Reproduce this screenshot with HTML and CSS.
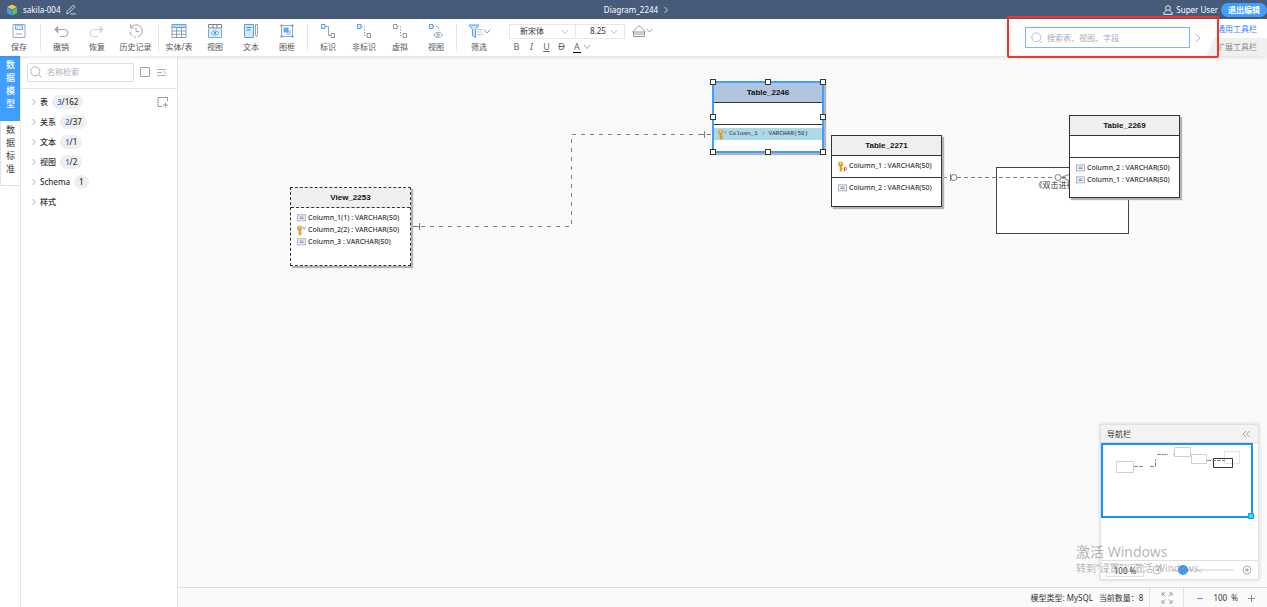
FILE: index.html
```html
<!DOCTYPE html>
<html lang="zh-CN">
<head>
    <meta charset="UTF-8">
    <meta name="viewport" content="width=device-width, initial-scale=1.0">
    <title>sakila-004</title>
    <link rel="stylesheet" href="styles.css">
</head>
<body>
    <!-- shared icons -->
    <svg class="defs" width="0" height="0" aria-hidden="true">
        <symbol id="i-right" viewBox="0 0 8 10"><path d="M2 1l4 4-4 4" fill="none" stroke="currentColor"/></symbol>
        <symbol id="i-down" viewBox="0 0 8 6"><path d="M1 1l3 3.5L7 1" fill="none" stroke="currentColor" stroke-width=".9"/></symbol>
        <symbol id="i-search" viewBox="0 0 12 12"><circle cx="5.3" cy="5.3" r="4.5" fill="none" stroke="currentColor" stroke-width=".9"/><path d="M8.5 8.5l2.8 2.8" stroke="currentColor"/></symbol>
        <symbol id="i-col" viewBox="0 0 9 8"><rect x=".5" y=".8" width="8" height="6" fill="#eef1f6" stroke="#a9adb5" stroke-width=".9"/><path d="M2.5 3h4M2.5 4.5h4" stroke="#7c9ccb" stroke-width="1"/></symbol>
        <symbol id="i-key" viewBox="0 0 11 11"><circle cx="3.6" cy="3" r="2.6" fill="#e2a92f"/><circle cx="3.6" cy="2.2" r=".7" fill="#fff3cf"/><path d="M2.7 5h2v5.5h-2z" fill="#d89a20"/><path d="M4.7 7.2h1.2M4.7 9h1.2" stroke="#d89a20"/></symbol>
    </svg>

    <header class="topbar">
        <div class="project">
            <svg width="12" height="12" viewBox="0 0 12 12"><path d="M6 .5l5 2.5-5 2.6L1 3z" fill="#f8c63d"/><path d="M1 3.4l4.7 2.5v5.6L1 9z" fill="#3f9bf5"/><path d="M11 3.4L6.3 5.9v5.6L11 9z" fill="#5cc06a"/></svg>
            <span class="project-name">sakila-004</span>
            <button class="plain" aria-label="重命名"><svg width="11" height="11" viewBox="0 0 11 11"><path d="M1 7.600L7.200 1.200l1.700 1.600-6.200 6.400-2 .4zM4.500 9.900H10" fill="none" stroke="#dfe5ee" stroke-width=".9"/></svg></button>
        </div>
        <div class="diagram-name">Diagram_2244 <svg width="6" height="8"><use href="#i-right"/></svg></div>
        <div class="user">
            <svg width="10" height="10" viewBox="0 0 10 10"><circle cx="5" cy="3" r="2.4" fill="none" stroke="#fff" stroke-width=".9"/><path d="M.7 9.3c0-2.3 1.4-3.4 2.8-3.7M9.3 9.3c0-2.3-1.4-3.4-2.8-3.7M.5 9.3h9" fill="none" stroke="#fff" stroke-width=".9"/></svg>
            <span>Super User</span>
            <button class="exit">退出编辑</button>
        </div>
    </header>

    <div class="toolbar">
        <button class="tool save"><svg viewBox="0 0 16 16"><path d="M2 1.500h12v13H2z" fill="none" stroke="#9aa6b8"/><path d="M4.500 2h7v4.500h-7z" fill="#d6e8ff" stroke="#6aabf7"/><path d="M5 11h6" stroke="#9aa6b8"/></svg>保存</button>
        <i class="sep"></i>
        <button class="tool"><svg viewBox="0 0 16 16"><path d="M5 3L1.500 6.500 5 10z" fill="#9aa6b8" stroke="#9aa6b8" stroke-width=".6"/><path d="M4 6.500h7.500a3.500 3.500 0 010 7H7" fill="none" stroke="#9aa6b8"/></svg>撤销</button>
        <button class="tool"><svg viewBox="0 0 16 16"><path d="M11 3l3.500 3.500L11 10z" fill="#d3d9e2" stroke="#c8d0dc" stroke-width=".6"/><path d="M12 6.500H4.500a3.500 3.500 0 000 7H9" fill="none" stroke="#c8d0dc"/></svg>恢复</button>
        <button class="tool history"><svg viewBox="0 0 16 16"><path d="M3 4.500A6.200 6.200 0 112 9" fill="none" stroke="#9aa6b8" stroke-dasharray="24 1.500 2 1.500"/><path d="M2.500 1.500v3.500H6M8 4.500V8.500h3" fill="none" stroke="#9aa6b8"/></svg>历史记录</button>
        <i class="sep"></i>
        <button class="tool"><svg viewBox="0 0 16 16"><path d="M1 1.500h14v3H1z" fill="#b9d8ff"/><path d="M1 1.500h14v13H1zM1 4.500h14M1 8h14M1 11.300h14M5.500 4.500v10M10.500 4.500v10" fill="none" stroke="#7f93b3" stroke-width=".9"/><path d="M1 1.500h14M1 4.500h14" stroke="#5ba3f8"/></svg>实体/表</button>
        <button class="tool"><svg viewBox="0 0 16 16"><path d="M1.500 5V1.500h13V5zM6 1.500V5M10 1.500V5" fill="none" stroke="#77808f"/><path d="M1.500 6v8.500h13V6" fill="#e1efff" stroke="#6aabf7"/><path d="M4.200 10c2-2.800 5.600-2.800 7.600 0-2 2.800-5.600 2.800-7.600 0z" fill="#fff" stroke="#4196f7" stroke-width=".9"/><circle cx="8" cy="10" r="1.200" fill="#4196f7"/></svg>视图</button>
        <button class="tool"><svg viewBox="0 0 16 16"><path d="M1.500 1.500h9v13h-9z" fill="#d6e8ff" stroke="#4f9ef8"/><path d="M3.500 4.500h5M3.500 7h4" stroke="#3b87e8"/><path d="M12.500 1.500h2v10l-1 2.500-1-2.500z" fill="none" stroke="#8a94a5" stroke-width=".9"/></svg>文本</button>
        <button class="tool"><svg viewBox="0 0 16 16"><path d="M2.500 2.500h11v11h-11z" fill="none" stroke="#9aa6b8"/><path d="M1.500 1.500h2v2h-2zM12.500 1.500h2v2h-2zM1.500 12.500h2v2h-2zM12.500 12.500h2v2h-2z" fill="#8491a6"/><path d="M7 7h5v5H7z" fill="#b5d6ff"/><path d="M4.500 4.500h5v5h-5z" fill="#61a8fa"/></svg>图框</button>
        <i class="sep"></i>
        <button class="tool"><svg viewBox="0 0 16 16"><path d="M1.500 1.500H5v4H1.500z" fill="#e3f0ff" stroke="#4f9ef8"/><path d="M5 3.500h3.500v9H11" fill="none" stroke="#8a94a5" stroke-width=".9"/><path d="M11 10.500h3.500v4H11z" fill="#fff" stroke="#8a94a5"/></svg>标识</button>
        <button class="tool"><svg viewBox="0 0 16 16"><path d="M1.500 1.500H5v4H1.500z" fill="#e3f0ff" stroke="#4f9ef8"/><path d="M5 3.500h3.500v9H11" fill="none" stroke="#8a94a5" stroke-width=".9" stroke-dasharray="1.500 1.500"/><path d="M11 10.500h3.500v4H11z" fill="#fff" stroke="#8a94a5"/></svg>非标识</button>
        <button class="tool"><svg viewBox="0 0 16 16"><path d="M1.500 1.500H5v4H1.500z" fill="#fff" stroke="#8a94a5"/><path d="M5 3.500h3.500v9H11" fill="none" stroke="#8a94a5" stroke-width=".9" stroke-dasharray="1.500 1.500"/><path d="M11 10.500h3.500v4H11z" fill="#fff" stroke="#8a94a5"/></svg>虚拟</button>
        <button class="tool"><svg viewBox="0 0 16 16"><path d="M1.500 1.500H5v4H1.500z" fill="#e3f0ff" stroke="#4f9ef8"/><path d="M5 3.500h5.500v4" fill="none" stroke="#8a94a5" stroke-width=".9" stroke-dasharray="1.500 1.500"/><path d="M6 12c2.200-3.400 6.300-3.400 8.500 0-2.200 3.400-6.300 3.400-8.500 0z" fill="none" stroke="#8a94a5" stroke-width=".9"/><circle cx="10.200" cy="12" r="1.200" fill="none" stroke="#8a94a5" stroke-width=".9"/></svg>视图</button>
        <i class="sep"></i>
        <button class="tool filter"><svg class="wide" viewBox="0 0 24 16"><path d="M2 2h10L8.500 6.500v8l-3-1.800V6.500z" fill="#cfe4ff" stroke="#4f9ef8"/><path d="M10.500 6.500h5M10.500 9h5M10.500 11.500h5" stroke="#b3bcc9" stroke-width=".9"/><path d="M17 6.500l3.200 3.500 3.200-3.500" fill="none" stroke="#8a94a5"/></svg>筛选</button>

        <div class="format">
            <div class="format-row">
                <span class="select family">
                    <select aria-label="字体"><option>新宋体</option></select>
                    <svg width="8" height="6"><use href="#i-down"/></svg>
                </span>
                <span class="select size">
                    <select aria-label="字号"><option>8.25</option></select>
                    <svg width="8" height="6"><use href="#i-down"/></svg>
                </span>
                <button class="plain fill" aria-label="填充"><svg width="24" height="14" viewBox="0 0 24 14"><path d="M1.500 8L8 1.500 14.500 8zM2.500 8v4.500h11V8M2.500 10h11" fill="none" stroke="#8c8c8c" stroke-width=".9"/><path d="M15.500 5l3 3 3-3" fill="none" stroke="#8a94a5" stroke-width=".9"/></svg></button>
            </div>
            <div class="format-row marks">
                <button class="plain mark">B</button>
                <button class="plain mark"><em>I</em></button>
                <button class="plain mark"><u>U</u></button>
                <button class="plain mark"><s>D</s></button>
                <button class="plain mark color">A</button>
                <svg width="8" height="6"><use href="#i-down"/></svg>
            </div>
        </div>

        <div class="finder">
            <label class="find-box">
                <svg width="12" height="12"><use href="#i-search"/></svg>
                <input type="text" placeholder="搜索表、视图、字段" aria-label="搜索">
            </label>
            <button class="plain next" aria-label="下一个"><svg width="8" height="10"><use href="#i-right"/></svg></button>
        </div>
        <div class="bar-tabs">
            <button class="bar-tab active">通用工具栏</button>
            <button class="bar-tab">扩展工具栏</button>
        </div>
        <div class="highlight"></div>
    </div>

    <main class="main">
        <nav class="side-tabs">
            <button class="side-tab active">数据模型</button>
            <button class="side-tab">数据标准</button>
        </nav>

        <aside class="sidebar">
            <div class="side-search">
                <label class="side-box">
                    <svg width="12" height="12"><use href="#i-search"/></svg>
                    <input type="text" placeholder="名称检索" aria-label="名称检索">
                </label>
                <input type="checkbox" class="check" aria-label="全选">
                <button class="plain" aria-label="排序"><svg width="11" height="10" viewBox="0 0 11 10"><path d="M1 2.500h9M1 5.500h5M1 8.500h9M7.500 4L9 5.500 7.500 7" fill="none" stroke="#a0a5ad" stroke-width=".9"/></svg></button>
            </div>
            <ul class="tree">
                <li><svg width="6" height="8"><use href="#i-right"/></svg>表<span class="badge"><b>3</b>/162</span>
                    <button class="plain add" aria-label="新增"><svg width="12" height="12" viewBox="0 0 12 12"><path d="M10.500 5V1.500H1v9h4M8.500 6.500v5M6 9h5" fill="none" stroke="#9a9a9a"/></svg></button></li>
                <li><svg width="6" height="8"><use href="#i-right"/></svg>关系<span class="badge"><b>2</b>/37</span></li>
                <li><svg width="6" height="8"><use href="#i-right"/></svg>文本<span class="badge"><b>1</b>/1</span></li>
                <li><svg width="6" height="8"><use href="#i-right"/></svg>视图<span class="badge"><b>1</b>/2</span></li>
                <li><svg width="6" height="8"><use href="#i-right"/></svg>Schema<span class="badge">1</span></li>
                <li><svg width="6" height="8"><use href="#i-right"/></svg>样式</li>
            </ul>
        </aside>

        <section class="work">
            <div class="canvas">
                <div class="note">《双击进行编辑》</div>

                <svg class="links" width="1000" height="300">
                    <g fill="none" stroke="#808080">
                        <path d="M234 170.500H393.500V78.500H534" stroke-dasharray="4 5"/>
                        <path d="M237 170.500h4M241.500 167v7M524 78.500h2M526.500 75v7"/>
                        <path d="M765 121.500h127" stroke-dasharray="4 3"/>
                        <path d="M772.500 118v7M883 121.500l8-3M883 121.500l8 3"/>
                        <circle cx="776" cy="121.500" r="3" fill="#fff"/>
                        <circle cx="880" cy="121.500" r="3" fill="#fff"/>
                    </g>
                </svg>

                <div class="entity view" id="view2253">
                    <h2>View_2253</h2>
                    <div class="part">
                        <p><svg width="11" height="8"><use href="#i-col"/></svg>Column_1(1) : VARCHAR(50)</p>
                        <p><svg width="11" height="11"><use href="#i-key"/><path d="M7 1.500l1.300 3L9.600 1.500" fill="none" stroke="#5cb0d8" stroke-width=".8"/></svg>Column_2(2) : VARCHAR(50)</p>
                        <p><svg width="11" height="8"><use href="#i-col"/></svg>Column_3 : VARCHAR(50)</p>
                    </div>
                </div>

                <div class="entity selected" id="table2246">
                    <h2>Table_2246</h2>
                    <div class="part blank"></div>
                    <div class="part">
                        <p class="on"><svg width="11" height="11"><use href="#i-key"/><path d="M7 1.500l1.300 3L9.600 1.500" fill="none" stroke="#5cb0d8" stroke-width=".8"/></svg>Column_1 : VARCHAR(50)</p>
                    </div>
                    <i class="handle n w"></i><i class="handle n c"></i><i class="handle n e"></i>
                    <i class="handle m w"></i><i class="handle m e"></i>
                    <i class="handle s w"></i><i class="handle s c"></i><i class="handle s e"></i>
                </div>

                <div class="entity" id="table2271">
                    <h2>Table_2271</h2>
                    <div class="part keys">
                        <p><svg width="11" height="11"><use href="#i-key"/><path d="M7.500 10.500V6.500h1a1 1 0 010 2.200h-1" fill="none" stroke="#e33" stroke-width=".9"/></svg>Column_1 : VARCHAR(50)</p>
                    </div>
                    <div class="part">
                        <p><svg width="11" height="8"><use href="#i-col"/></svg>Column_2 : VARCHAR(50)</p>
                    </div>
                </div>

                <div class="entity" id="table2269">
                    <h2>Table_2269</h2>
                    <div class="part blank"></div>
                    <div class="part">
                        <p><svg width="11" height="8"><use href="#i-col"/></svg>Column_2 : VARCHAR(50)</p>
                        <p><svg width="11" height="8"><use href="#i-col"/></svg>Column_1 : VARCHAR(50)</p>
                    </div>
                </div>

                <div class="navigator">
                    <div class="nav-head">导航栏<button class="plain" aria-label="收起"><svg width="8" height="8" viewBox="0 0 8 8"><path d="M4 1L1 4l3 3M7.500 1l-3 3 3 3" fill="none" stroke="#888" stroke-width=".8"/></svg></button></div>
                    <div class="nav-map">
                        <svg width="157" height="117" viewBox="0 0 157 117">
                            <g fill="#fff" stroke="#d0d0d0">
                                <path d="M15.500 18.500h17v11h-17zM73.500 4.500h16v9h-16zM90.500 11.500h15v9h-15z"/>
                                <path d="M123.500 8.500h15v12h-15z" stroke="#e3e3e3"/>
                            </g>
                            <path d="M112.500 15.500h19v9h-19z" fill="none" stroke="#333"/>
                            <path d="M33 23.500h10M49 23.500h5.500M54.500 23v-7M56 11.500h11M72 11.500h1M106 17.500h18" fill="none" stroke="#888" stroke-dasharray="4 1"/>
                            <path d="M1 1h150v73H1z" fill="none" stroke="#1296fb" stroke-width="2"/>
                            <path d="M147.500 70.500h5v5h-5z" fill="#00f0ff" stroke="#3b82e8"/>
                        </svg>
                    </div>
                    <div class="nav-foot">
                        <input type="text" class="nav-zoom" value="100 %" aria-label="缩放比例">
                        <button class="plain" aria-label="缩小"><svg width="10" height="10" viewBox="0 0 10 10"><circle cx="5" cy="5" r="4" fill="none" stroke="#aaa" stroke-width=".8"/><path d="M3 5h4" stroke="#aaa"/></svg></button>
                        <input type="range" class="slider" min="0" max="100" value="14" aria-label="缩放">
                        <button class="plain" aria-label="放大"><svg width="10" height="10" viewBox="0 0 10 10"><circle cx="5" cy="5" r="4" fill="none" stroke="#999" stroke-width=".8"/><path d="M3 5h4M5 3v4" stroke="#999"/></svg></button>
                    </div>
                </div>
            </div>

            <footer class="status">
                <span>模型类型: MySQL</span>
                <span class="count">当前数量：8</span>
                <button class="plain fit" aria-label="全屏"><svg width="12" height="12" viewBox="0 0 12 12"><path d="M1 4V1h3M1 1l3.500 3.500M8 1h3v3M11 1L7.500 4.500M1 8v3h3M1 11l3.500-3.500M11 8v3H8M11 11L7.500 7.500" fill="none" stroke="#999" stroke-width=".9"/></svg></button>
                <div class="zoom">
                    <button class="plain" aria-label="缩小"><svg width="8" height="8"><path d="M1 4.500h6" stroke="#888"/></svg></button>
                    <span>100&nbsp; %</span>
                    <button class="plain" aria-label="放大"><svg width="8" height="8"><path d="M1 4.500h7M4.500 1v7" stroke="#7d8fa8"/></svg></button>
                </div>
            </footer>
        </section>
    </main>

    <div class="watermark">
        <div class="wm-title">激活 Windows</div>
        <div>转到“设置”以激活 Windows。</div>
    </div>
</body>
</html>
```

FILE: styles.css
```css
* {
    box-sizing: border-box;
}
html, body {
    height: 100%;
    margin: 0;
    overflow: hidden;
}
body {
    display: flex;
    flex-direction: column;
    font-family: "Noto Sans", "Noto Sans CJK SC", sans-serif;
    font-size: 8px;
    line-height: 12px;
    color: #333;
    background: #fff;
}
button, input, select {
    font: inherit;
    color: inherit;
}
button {
    padding: 0;
    border: none;
    background: none;
    cursor: pointer;
}
svg {
    display: block;
    flex: none;
}
.defs {
    position: absolute;
}
.plain {
    display: flex;
    align-items: center;
    justify-content: center;
}

/* top bar */
.topbar {
    flex: none;
    display: grid;
    grid-template-columns: 1fr auto 1fr;
    align-items: center;
    height: 19px;
    padding-left: 6px;
    background: #475b7b;
    color: #fff;
}
.project, .diagram-name, .user {
    display: flex;
    align-items: center;
    gap: 5px;
}
.user {
    justify-content: flex-end;
    gap: 3px;
}
.exit {
    width: 46px;
    height: 14px;
    border-radius: 7px;
    background: #409eff;
    line-height: 14px;
    font-weight: bold;
}

/* toolbar */
.toolbar {
    position: relative;
    z-index: 5;
    flex: none;
    display: flex;
    height: 37px;
    background: #fff;
    box-shadow: 0 1px 4px rgba(0, 0, 0, 0.12);
}
.tool {
    flex: none;
    display: flex;
    flex-direction: column;
    align-items: center;
    gap: 2px;
    width: 36px;
    padding-top: 4px;
    color: #555;
    white-space: nowrap;
}
.tool svg {
    width: 16px;
    height: 16px;
}
.tool svg.wide {
    width: 24px;
}
.tool.save {
    width: 38px;
}
.tool.history {
    width: 41px;
}
.tool.filter {
    width: 40px;
}
.sep {
    flex: none;
    width: 1px;
    margin: 5px 2px;
    background: #e4e4e4;
}
.format {
    padding: 4px 0 0 10px;
}
.format-row {
    display: flex;
    align-items: center;
    height: 16px;
}
.select {
    position: relative;
    height: 15px;
    border: 1px solid #e3e6ec;
}
.select select {
    width: 100%;
    height: 13px;
    padding: 0 0 0 10px;
    border: none;
    background: none;
    appearance: none;
}
.select svg {
    position: absolute;
    right: 6px;
    top: 4px;
    color: #b4bac4;
}
.family {
    width: 67px;
}
.size {
    width: 49px;
    border-left: none;
}
.size select {
    padding-left: 14px;
}
.fill {
    margin-left: 6px;
}
.marks {
    color: #666;
}
.mark {
    width: 15px;
    font-size: 9px;
}
.marks svg {
    color: #999;
}
.color {
    width: 8px;
    margin: 0 2px 0 4px;
    border-bottom: 1px solid #000;
    line-height: 11px;
}
.finder {
    display: flex;
    align-items: center;
    gap: 4px;
    margin-left: auto;
    margin-right: 4px;
    color: #b5bac3;
}
.find-box {
    display: flex;
    align-items: center;
    gap: 4px;
    width: 165px;
    height: 21px;
    padding: 0 5px;
    border: 1px solid #7ab8fa;
}
.find-box input, .side-box input {
    flex: 1;
    min-width: 0;
    padding: 0;
    border: none;
    outline: none;
    background: none;
}
::placeholder {
    color: #a8adb6;
    opacity: 1;
}
.bar-tabs {
    display: flex;
    flex-direction: column;
    width: 61px;
}
.bar-tab {
    height: 18px;
    padding-left: 11px;
    text-align: left;
    color: #888;
    background: #f0f0f0;
    clip-path: polygon(8px 0, 100% 0, 100% 100%, 0 100%);
}
.bar-tab.active {
    height: 19px;
    padding-top: 1px;
    color: #3c7dff;
    background: #fff;
}
.highlight {
    position: absolute;
    right: 48px;
    top: -3px;
    width: 212px;
    height: 42px;
    border: 2px solid #fa3226;
    border-radius: 2px;
    pointer-events: none;
}

/* left side */
.main {
    flex: 1;
    display: flex;
    min-height: 0;
}
.side-tabs {
    flex: none;
    width: 20px;
}
.side-tab {
    display: block;
    width: 20px;
    height: 65px;
    padding: 2px 5px 11px;
    border: 1px solid #e2e2e2;
    border-top: none;
    border-right: none;
    font-size: 9px;
    line-height: 13px;
    word-break: break-all;
}
.side-tab.active {
    background: #409eff;
    border-color: #409eff;
    color: #fff;
    font-weight: 500;
}
.sidebar {
    flex: none;
    width: 158px;
    border-left: 1px solid #e4e6ea;
    border-right: 1px solid #e4e6ea;
}
.side-search {
    display: flex;
    align-items: center;
    gap: 6px;
    height: 33px;
    padding-left: 6px;
    border-bottom: 1px solid #e2e4e8;
}
.side-box {
    display: flex;
    align-items: center;
    gap: 5px;
    width: 107px;
    height: 19px;
    padding: 0 2px;
    border: 1px solid #dcdfe6;
    border-radius: 1px;
    color: #a5abb5;
}
.check {
    width: 10px;
    height: 10px;
    margin: 0;
    border: 1px solid #a0a0a0;
    border-radius: 1px;
    appearance: none;
}
.tree {
    margin: 0;
    padding: 3px 8px 0 10px;
    list-style: none;
}
.tree li {
    display: flex;
    align-items: center;
    height: 20px;
    font-weight: 500;
}
.tree li > svg {
    margin-right: 3px;
    color: #999;
}
.badge {
    margin-left: 4px;
    padding: 1px 5px;
    border-radius: 7px;
    background: #efefef;
}
.badge b {
    font-weight: 600;
    color: #3c7dff;
}
.add {
    margin-left: auto;
}

/* canvas */
.work {
    flex: 1;
    display: flex;
    flex-direction: column;
    min-width: 0;
}
.canvas {
    flex: 1;
    position: relative;
    overflow: hidden;
    background: #fafafa;
}
.links {
    position: absolute;
    left: 0;
    top: 0;
}
.note {
    position: absolute;
    left: 818px;
    top: 111px;
    width: 133px;
    height: 67px;
    padding: 11px 0 0 8px;
    border: 1px solid #444;
    background: #fff;
    text-align: center;
}
.entity {
    position: absolute;
    width: 111px;
    border: 1px solid #333;
    background: #fff;
    box-shadow: 2px 2px 1px #b4b4b4;
    font-size: 7px;
    font-weight: 500;
    white-space: nowrap;
}
.entity h2 {
    margin: 0;
    height: 20px;
    border-bottom: 1px solid #333;
    background: #efefef;
    font: bold 8px/20px "Liberation Sans", sans-serif;
    text-align: center;
    color: #111;
}
.part {
    padding: 4px 0 10px;
}
.part.blank {
    height: 22px;
    padding: 0;
    border-bottom: 1px solid #333;
}
.part.keys {
    padding-bottom: 5px;
    border-bottom: 1px solid #333;
}
.part p {
    display: flex;
    align-items: center;
    gap: 1px;
    height: 12px;
    margin: 0;
    padding-left: 5px;
}
#view2253 {
    left: 112px;
    top: 131px;
    width: 121px;
    height: 79px;
}
.entity.view {
    border-style: dashed;
}
.view h2 {
    border-bottom-style: dashed;
}
#table2246 {
    left: 534px;
    top: 25px;
    height: 72px;
    width: 112px;
}
#table2271 {
    left: 653px;
    top: 79px;
    height: 72px;
}
#table2269 {
    left: 891px;
    top: 59px;
    height: 83px;
}
.entity.selected {
    border: 2px solid #409eff;
}
.selected h2 {
    background: #b0c4de;
}
.selected .part {
    padding-top: 3px;
}
.part .on {
    padding-left: 3px;
    background: #add8e6;
    font-family: "Liberation Mono", monospace;
    font-size: 6px;
}
.handle {
    position: absolute;
    width: 6px;
    height: 6px;
    border: 1px solid #333;
    background: #fff;
}
.n {
    top: -4px;
}
.m {
    top: calc(50% - 3px);
}
.s {
    bottom: -4px;
}
.w {
    left: -4px;
}
.c {
    left: calc(50% - 3px);
}
.e {
    right: -4px;
}

/* navigator */
.navigator {
    position: absolute;
    right: 8px;
    bottom: 7px;
    width: 159px;
    border: 1px solid #e0e0e0;
    background: #fff;
    box-shadow: 0 0 4px rgba(0, 0, 0, 0.15);
}
.nav-head {
    display: flex;
    justify-content: space-between;
    align-items: center;
    height: 18px;
    padding: 0 8px 0 6px;
    border-bottom: 1px solid #ddd;
    background: #f3f3f3;
}
.nav-map {
    overflow: hidden;
}
.nav-foot {
    display: flex;
    align-items: center;
    gap: 8px;
    height: 19px;
    padding: 0 6px 0 5px;
    border-top: 1px solid #e0e0e0;
}
.nav-zoom {
    width: 38px;
    height: 13px;
    padding: 0;
    border: 1px solid #e0e0e0;
    text-align: center;
}
.slider {
    flex: 1;
    min-width: 0;
    height: 10px;
    margin: 0;
    background: linear-gradient(#e4e7ed, #e4e7ed) center / 100% 2px no-repeat;
    appearance: none;
}
.slider::-webkit-slider-thumb {
    width: 10px;
    height: 10px;
    border-radius: 50%;
    background: #409eff;
    appearance: none;
}

/* status bar */
.status {
    flex: none;
    display: flex;
    align-items: center;
    justify-content: flex-end;
    height: 20px;
    border-top: 1px solid #ddd;
    background: #fafafa;
}
.count {
    margin: 0 6px;
}
.fit {
    width: 35px;
    height: 19px;
    border-left: 1px solid #e2e2e2;
    border-right: 1px solid #e2e2e2;
}
.zoom {
    display: flex;
    align-items: center;
    gap: 9px;
    padding: 0 12px;
}

.watermark {
    position: absolute;
    right: 59px;
    bottom: 33px;
    width: 132px;
    font-size: 10px;
    color: rgba(120, 120, 120, 0.55);
    white-space: nowrap;
    pointer-events: none;
    z-index: 10;
}
.wm-title {
    font-size: 14px;
    line-height: 20px;
}
```
